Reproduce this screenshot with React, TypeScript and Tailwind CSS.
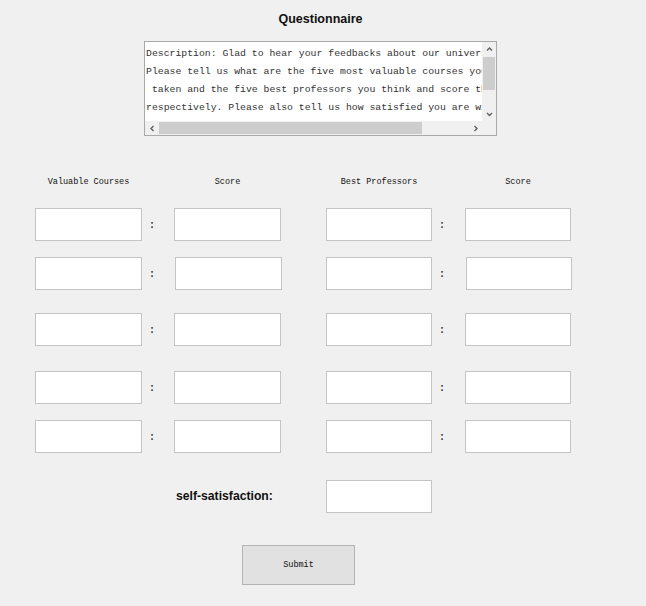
import React from 'react'

const mono = { fontFamily: '"Liberation Mono", "DejaVu Sans Mono", monospace' }
const sans = { fontFamily: '"Liberation Sans", Arial, sans-serif' }

const description = [
  'Description: Glad to hear your feedbacks about our university.',
  'Please tell us what are the five most valuable courses you have',
  ' taken and the five best professors you think and score them',
  'respectively. Please also tell us how satisfied you are with',
  '   our university and the school life.',
]

// small chevron for the scrollbar buttons
const Chevron = ({ dir }: { dir: 'up' | 'down' | 'left' | 'right' }) => {
  const d = {
    up: 'M1 4.5 L3.5 2 L6 4.5',
    down: 'M1 2 L3.5 4.5 L6 2',
    left: 'M4.5 1 L2 3.5 L4.5 6',
    right: 'M2.5 1 L5 3.5 L2.5 6',
  }[dir]
  return (
    <svg width="7" height="7" viewBox="0 0 7 7">
      <path d={d} fill="none" stroke="#606060" strokeWidth="1.4" />
    </svg>
  )
}

const Field = ({ w, shift = false }: { w: string; shift?: boolean }) => (
  <div className={`${w} ${shift ? 'ml-px' : ''} h-[33px] bg-white border border-[#c4c4c4]`} />
)

const Colon = ({ w }: { w: string }) => (
  <div className={`${w} h-[33px] flex items-center pl-[7px] pt-[2px] text-[10px] font-bold text-[#333]`} style={mono}>
    :
  </div>
)

const Row = ({ mt, shift = false }: { mt: string; shift?: boolean }) => (
  <div className={`${mt} flex items-center pl-[35px]`}>
    <Field w="w-[107px]" />
    <Colon w="w-[32px]" />
    <Field w="w-[107px]" shift={shift} />
    <div className={shift ? 'w-[44px]' : 'w-[45px]'} />
    <Field w="w-[106px]" />
    <Colon w="w-[33px]" />
    <Field w="w-[106px]" shift={shift} />
  </div>
)

export default function App() {
  return (
    <div className="w-[646px] h-[606px] bg-[#f0f0f0] flex flex-col pt-[12px] overflow-hidden">
      <h1 className="text-center text-[12.5px] leading-[14px] font-bold text-[#111] pr-[5px]" style={sans}>
        Questionnaire
      </h1>

      {/* description box with scrollbars */}
      <div className="mt-[15px] ml-[144px] w-[353px] h-[95px] border border-[#a9a9a9] flex flex-col">
        <div className="flex h-[79px]">
          <div className="flex-1 bg-white overflow-hidden pl-[1px] pt-[3px]">
            {description.map((line, i) => (
              <div key={i} className="whitespace-pre text-[9.8px] leading-[18px] text-[#333]" style={mono}>
                {line}
              </div>
            ))}
          </div>
          <div className="w-[14px] bg-[#f0f0f0] flex flex-col">
            <div className="h-[14px] flex items-center justify-center">
              <Chevron dir="up" />
            </div>
            <div className="mt-px mx-px h-[33px] bg-[#cdcdcd]" />
            <div className="flex-1" />
            <div className="h-[14px] flex items-center justify-center">
              <Chevron dir="down" />
            </div>
          </div>
        </div>
        <div className="flex h-[14px] bg-[#f0f0f0]">
          <div className="w-[14px] flex items-center justify-center">
            <Chevron dir="left" />
          </div>
          <div className="flex-1 flex items-center">
            <div className="w-[263px] h-[12px] bg-[#cdcdcd]" />
          </div>
          <div className="w-[14px] flex items-center justify-center">
            <Chevron dir="right" />
          </div>
          <div className="w-[14px]" />
        </div>
      </div>

      {/* column headers */}
      <div className="mt-[40px] flex pl-[35px] text-[8.5px] leading-[12px] text-[#111]" style={mono}>
        <div className="w-[107px] text-center">Valuable Courses</div>
        <div className="w-[32px]" />
        <div className="w-[107px] text-center">Score</div>
        <div className="w-[45px]" />
        <div className="w-[106px] text-center">Best Professors</div>
        <div className="w-[33px]" />
        <div className="w-[106px] text-center">Score</div>
      </div>

      <Row mt="mt-[20px]" />
      <Row mt="mt-[16px]" shift />
      <Row mt="mt-[23px]" />
      <Row mt="mt-[25px]" />
      <Row mt="mt-[16px]" />

      <div className="mt-[27px] flex items-center">
        <div className="ml-[176px] w-[150px] text-[12.2px] font-bold text-[#111]" style={sans}>
          self-satisfaction:
        </div>
        <div className="w-[106px] h-[33px] bg-white border border-[#c4c4c4]" />
      </div>

      <button
        className="mt-[32px] ml-[242px] w-[113px] h-[40px] bg-[#e1e1e1] border border-[#b4b4b4] text-[8.5px] text-[#111]"
        style={mono}
      >
        Submit
      </button>
    </div>
  )
}
